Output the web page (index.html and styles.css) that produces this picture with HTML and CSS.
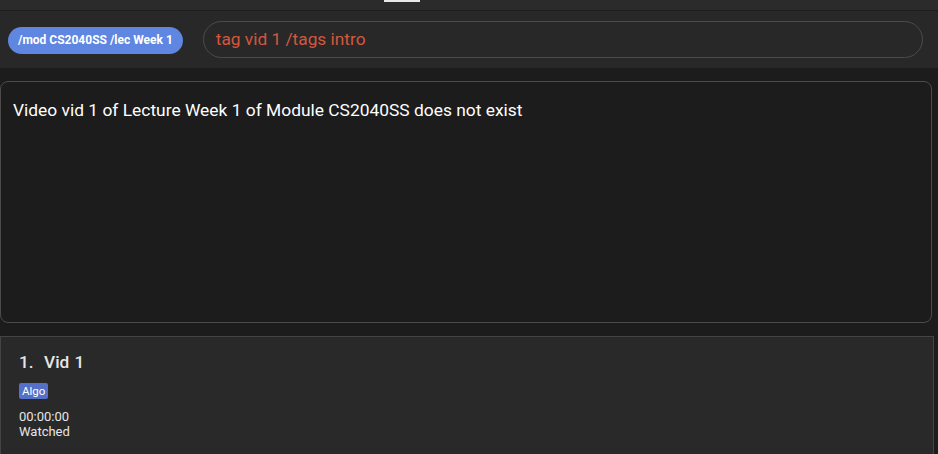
FILE: index.html
```html
<!DOCTYPE html>
<html>
<head>
<meta charset="utf-8">
<link rel="stylesheet" href="styles.css">
</head>
<body>
<div class="app">
  <div class="topbar"><span class="tab-indicator"></span></div>
  <div class="command-row">
    <span class="context-pill">/mod CS2040SS /lec Week 1</span>
    <div class="command-input">tag vid 1 /tags intro</div>
  </div>
  <div class="main">
    <div class="result-box">Video vid 1 of Lecture Week 1 of Module CS2040SS does not exist</div>
    <div class="card">
      <div class="card-title">1.&nbsp; Vid 1</div>
      <div class="tags"><span class="tag">Algo</span></div>
      <div class="meta">00:00:00</div>
      <div class="meta">Watched</div>
    </div>
  </div>
</div>
</body>
</html>
```
FILE: styles.css
```css
* { box-sizing: border-box; }
html, body { margin: 0; padding: 0; }
body {
  width: 938px;
  height: 454px;
  overflow: hidden;
  background: #1c1c1c;
  font-family: Roboto, "Liberation Sans", sans-serif;
  color: #ffffff;
}
.app { display: flex; flex-direction: column; height: 454px; }
.topbar {
  height: 11px;
  background: #2b2b2b;
  border-bottom: 1px solid #1e1e1e;
  position: relative;
}
.tab-indicator {
  position: absolute;
  left: 384px;
  top: 0;
  width: 36px;
  height: 2px;
  background: #e8e8e8;
}
.command-row {
  height: 57px;
  background: #282828;
  display: flex;
  align-items: center;
  padding: 0 15px 0 8px;
  gap: 20px;
}
.context-pill {
  background: #5f86e1;
  color: #ffffff;
  font-weight: bold;
  font-size: 12px;
  line-height: 27px;
  height: 27px;
  padding: 0 10px;
  border-radius: 14px;
  white-space: nowrap;
  margin-top: 2px;
}
.command-input {
  flex: 1;
  height: 37px;
  border: 1px solid #4b4b4b;
  border-radius: 19px;
  color: #d5573f;
  font-size: 17.3px;
  line-height: 35px;
  padding-left: 12px;
}
.main {
  flex: 1;
  display: flex;
  flex-direction: column;
  padding-top: 13px;
  gap: 13px;
}
.result-box {
  margin-right: 6px;
  height: 242px;
  border: 1px solid #4b4b4b;
  border-radius: 8px;
  background: #1c1c1c;
  font-size: 17.4px;
  line-height: 20px;
  padding: 18px 12px;
  color: #ffffff;
}
.card {
  flex: 1;
  margin-right: 4px;
  background: #292929;
  border: 1px solid #444444;
  border-bottom: none;
  padding: 14px 18px;
  color: #e6e6e6;
}
.card-title {
  font-size: 17.2px;
  font-weight: 500;
  line-height: 22px;
  word-spacing: 1px;
}
.tags { margin-top: 10px; height: 16px; display: flex; }
.tag {
  background: #5570c8;
  color: #ffffff;
  font-size: 11.5px;
  line-height: 16px;
  padding: 0 3px;
  border-radius: 2px;
}
.meta {
  font-size: 13px;
  line-height: 15px;
}
.tags + .meta { margin-top: 10px; }
```
